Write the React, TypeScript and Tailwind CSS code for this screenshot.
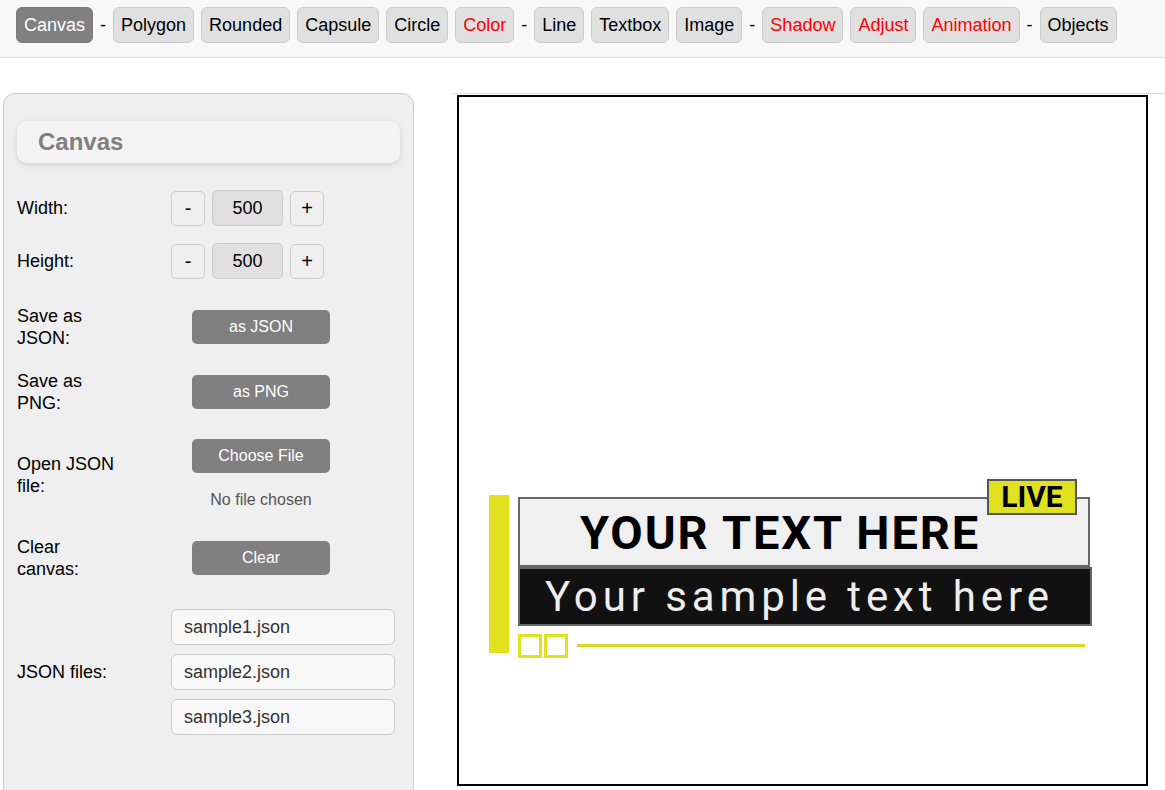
import React from "react";

type NavItem = { label: string; red?: boolean; active?: boolean } | "-";

const navItems: NavItem[] = [
  { label: "Canvas", active: true },
  "-",
  { label: "Polygon" },
  { label: "Rounded" },
  { label: "Capsule" },
  { label: "Circle" },
  { label: "Color", red: true },
  "-",
  { label: "Line" },
  { label: "Textbox" },
  { label: "Image" },
  "-",
  { label: "Shadow", red: true },
  { label: "Adjust", red: true },
  { label: "Animation", red: true },
  "-",
  { label: "Objects" },
];

function NavBar() {
  return (
    <div className="flex h-[58px] items-start gap-[7px] border-b border-[#dedede] bg-[#f8f8f8] pl-4 pt-[7px]">
      {navItems.map((item, i) =>
        item === "-" ? (
          <span key={i} className="flex h-9 items-center text-[18px] text-black">
            -
          </span>
        ) : (
          <button
            key={i}
            type="button"
            className={
              item.active
                ? "h-9 rounded-md border border-[#7a7a7a] bg-[#808080] px-[7px] text-[18px] text-white"
                : item.red
                  ? "h-9 rounded-md border border-[#cccccc] bg-[#e0e0e0] px-[7px] text-[18px] text-[#ff0000]"
                  : "h-9 rounded-md border border-[#cccccc] bg-[#e0e0e0] px-[7px] text-[18px] text-black"
            }
          >
            {item.label}
          </button>
        )
      )}
    </div>
  );
}

function Row({ label, children }: { label: string; children: React.ReactNode }) {
  return (
    <div className="flex items-center">
      <div className="w-[154px] pr-[46px] text-[18px] leading-[22px] text-black">{label}</div>
      {children}
    </div>
  );
}

function GrayButton({ children }: { children: React.ReactNode }) {
  return (
    <button
      type="button"
      className="h-[34px] w-[138px] rounded-[5px] bg-[#808080] text-[16px] text-white"
    >
      {children}
    </button>
  );
}

function SizeControl() {
  return (
    <div className="flex items-center gap-[7px]">
      <button
        type="button"
        className="h-[35px] w-[34px] rounded-[5px] border border-[#cccccc] bg-[#efefef] text-[20px] text-black"
      >
        -
      </button>
      <div className="flex h-9 w-[71px] items-center justify-center rounded-[5px] border border-[#cccccc] bg-[#e0e0e0] text-[18px] text-black">
        500
      </div>
      <button
        type="button"
        className="h-[35px] w-[34px] rounded-[5px] border border-[#cccccc] bg-[#efefef] text-[20px] text-black"
      >
        +
      </button>
    </div>
  );
}

function SidePanel() {
  return (
    <div className="ml-[3px] mt-[35px] h-[720px] w-[411px] shrink-0 rounded-t-[12px] border border-[#cccccc] bg-[#efefef] px-[13px] pt-[27px]">
      <div className="flex h-[42px] items-center rounded-[10px] bg-[#f4f4f4] pl-[21px] shadow-[0_2px_6px_rgba(0,0,0,0.12)]">
        <span className="text-[24px] font-bold text-[#808080]">Canvas</span>
      </div>

      <div className="mt-[27px] flex flex-col">
        <Row label="Width:">
          <SizeControl />
        </Row>
        <div className="mt-[17px]">
          <Row label="Height:">
            <SizeControl />
          </Row>
        </div>
        <div className="mt-[26px]">
          <Row label="Save as JSON:">
            <div className="flex w-[180px] justify-center">
              <GrayButton>as JSON</GrayButton>
            </div>
          </Row>
        </div>
        <div className="mt-[21px]">
          <Row label="Save as PNG:">
            <div className="flex w-[180px] justify-center">
              <GrayButton>as PNG</GrayButton>
            </div>
          </Row>
        </div>
        <div className="mt-[25px]">
          <Row label="Open JSON file:">
            <div className="flex w-[180px] flex-col items-center">
              <GrayButton>Choose File</GrayButton>
              <span className="mt-[16px] text-[16px] leading-[22px] text-[#555555]">
                No file chosen
              </span>
            </div>
          </Row>
        </div>
        <div className="mt-[25px]">
          <Row label="Clear canvas:">
            <div className="flex w-[180px] justify-center">
              <GrayButton>Clear</GrayButton>
            </div>
          </Row>
        </div>
        <div className="mt-[29px]">
          <Row label="JSON files:">
            <div className="flex flex-col gap-[9px]">
              {["sample1.json", "sample2.json", "sample3.json"].map((f) => (
                <div
                  key={f}
                  className="flex h-[36px] w-[224px] items-center rounded-[6px] border border-[#cccccc] bg-[#f8f8f8] pl-[12px] text-[18px] text-[#333333]"
                >
                  {f}
                </div>
              ))}
            </div>
          </Row>
        </div>
      </div>
    </div>
  );
}

function LowerThird() {
  return (
    <div className="relative h-full w-full" style={{ fontFamily: "Roboto, sans-serif" }}>
      {/* yellow side bar */}
      <div className="absolute left-[30px] top-[398px] h-[158px] w-[20px] bg-[#e1e11f]" />
      {/* headline box */}
      <div className="absolute left-[59px] top-[400px] flex h-[70px] w-[572px] items-center border-2 border-[#666666] bg-[#f0f0f0] pl-[60px]">
        <span className="text-[47px] font-bold leading-none tracking-[1.9px] text-black">
          YOUR TEXT HERE
        </span>
      </div>
      {/* LIVE badge */}
      <div className="absolute left-[528px] top-[382px] flex h-[36px] w-[90px] items-center justify-center border-2 border-[#555555] bg-[#e1e11f]">
        <span className="text-[30px] font-bold leading-none text-black">LIVE</span>
      </div>
      {/* subline box */}
      <div className="absolute left-[59px] top-[470px] flex h-[59px] w-[574px] items-center border-2 border-[#666666] bg-[#111111] pl-[25px]">
        <span className="text-[42px] leading-none tracking-[4.9px] text-[#eeeeee]">
          Your sample text here
        </span>
      </div>
      {/* small squares */}
      <div className="absolute left-[59px] top-[537px] h-[24px] w-[24px] border-[3px] border-[#e1e11f]" />
      <div className="absolute left-[85px] top-[537px] h-[24px] w-[24px] border-[3px] border-[#e1e11f]" />
      {/* underline */}
      <div className="absolute left-[118px] top-[547px] h-[3px] w-[508px] bg-[#d9d925]" />
    </div>
  );
}

export default function App() {
  return (
    <div
      className="h-[790px] w-[1165px] overflow-hidden bg-white"
      style={{ fontFamily: '"Liberation Sans", Arial, sans-serif' }}
    >
      <NavBar />
      <div className="flex">
        <SidePanel />
        <div className="ml-[38px] mt-[35px] flex-1 border-t border-[#dcdcdc] pl-[5px]">
          <div className="mt-px h-[691px] w-[691px] border-2 border-black bg-white">
            <LowerThird />
          </div>
        </div>
      </div>
    </div>
  );
}
